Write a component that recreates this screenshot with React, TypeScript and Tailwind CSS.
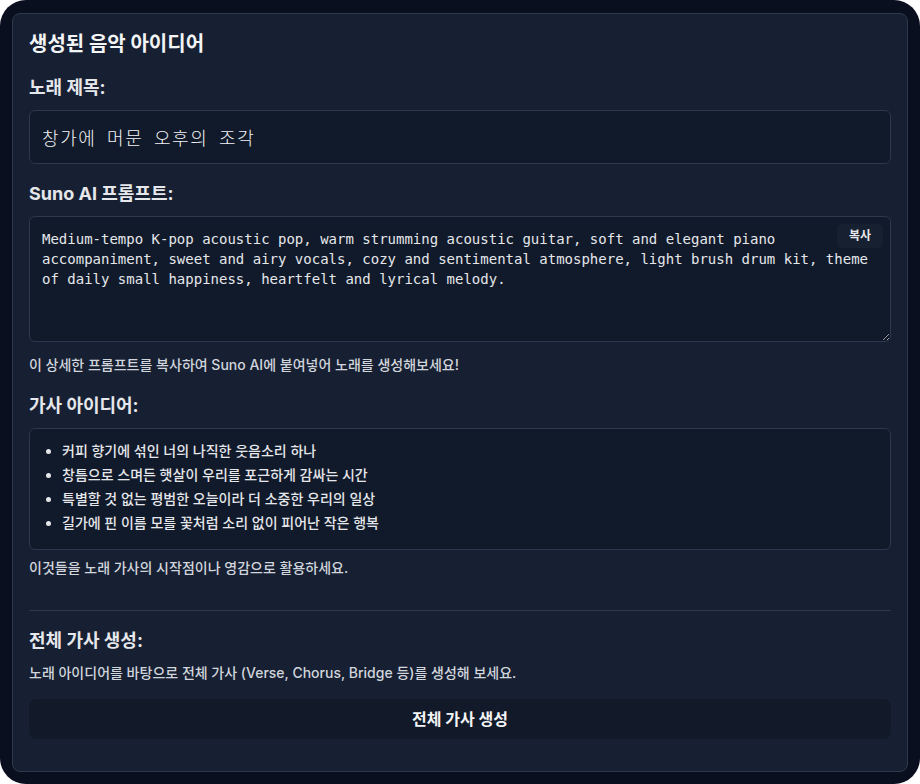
import { useState } from 'react'

const lyricIdeas = [
  '커피 향기에 섞인 너의 나직한 웃음소리 하나',
  '창틈으로 스며든 햇살이 우리를 포근하게 감싸는 시간',
  '특별할 것 없는 평범한 오늘이라 더 소중한 우리의 일상',
  '길가에 핀 이름 모를 꽃처럼 소리 없이 피어난 작은 행복',
]

const prompt =
  'Medium-tempo K-pop acoustic pop, warm strumming acoustic guitar, soft and elegant piano accompaniment, sweet and airy vocals, cozy and sentimental atmosphere, light brush drum kit, theme of daily small happiness, heartfelt and lyrical melody.'

export default function App() {
  const [copied, setCopied] = useState(false)

  return (
    <div className="min-h-screen bg-white font-['Inter','Noto_Sans_CJK_KR',sans-serif]">
      <div className="h-[784px] w-[920px] rounded-[26px] bg-[#0a0f1f] px-3 pt-[13px] pb-3">
        <div className="flex h-[759px] flex-col rounded-lg border border-[#2c384b] bg-[#172033] px-4 pt-4">
          <h2 className="text-xl leading-7 font-bold text-gray-100">생성된 음악 아이디어</h2>

          {/* Song title */}
          <h3 className="mt-4 text-lg leading-7 font-bold text-gray-200">노래 제목:</h3>
          <div className="mt-2 rounded-md border border-[#2c384b] bg-[#111a2a] px-3 py-3">
            <p className="font-['Noto_Sans_CJK_KR',sans-serif] text-lg leading-7 font-light tracking-[1.6px] text-gray-100 [word-spacing:5px]">
              창가에 머문 오후의 조각
            </p>
          </div>

          {/* Suno prompt */}
          <h3 className="mt-4 text-lg leading-7 font-bold text-gray-200">Suno AI 프롬프트:</h3>
          <div className="relative mt-2">
            <textarea
              readOnly
              rows={5}
              value={prompt}
              className="block w-full resize-y rounded-md border border-[#2c384b] bg-[#111a2a] px-3 py-3 font-['DejaVu_Sans_Mono',monospace] text-sm leading-5 text-gray-200 focus:outline-none"
            />
            <button
              onClick={() => setCopied(true)}
              className="absolute top-2 right-2 rounded-md bg-[#172031] px-3 py-1 text-xs leading-4 font-bold text-gray-200"
            >
              {copied ? '복사됨' : '복사'}
            </button>
          </div>
          <p className="mt-[13px] text-sm leading-5 font-medium text-gray-300">
            이 상세한 프롬프트를 복사하여 Suno AI에 붙여넣어 노래를 생성해보세요!
          </p>

          {/* Lyric ideas */}
          <h3 className="mt-[17px] text-lg leading-7 font-bold text-gray-200">가사 아이디어:</h3>
          <div className="mt-2 rounded-md border border-[#2c384b] bg-[#111a2a] px-3 pt-3 pb-4">
            <ul className="list-disc space-y-1 pl-5 text-sm leading-5 font-medium text-gray-200 marker:text-gray-200">
              {lyricIdeas.map((line) => (
                <li key={line}>{line}</li>
              ))}
            </ul>
          </div>
          <p className="mt-2 text-sm leading-5 font-medium text-gray-300">
            이것들을 노래 가사의 시작점이나 영감으로 활용하세요.
          </p>

          {/* Full lyrics */}
          <div className="mt-8 border-t border-[#2c384b] pt-4">
            <h3 className="text-lg leading-7 font-bold text-gray-200">전체 가사 생성:</h3>
            <p className="mt-2 text-sm leading-5 font-medium text-gray-300">
              노래 아이디어를 바탕으로 전체 가사 (Verse, Chorus, Bridge 등)를 생성해 보세요.
            </p>
            <button className="mt-4 flex h-10 w-full items-center justify-center rounded-lg bg-[#121a2a] text-base font-bold text-gray-100">
              전체 가사 생성
            </button>
          </div>
        </div>
      </div>
    </div>
  )
}
